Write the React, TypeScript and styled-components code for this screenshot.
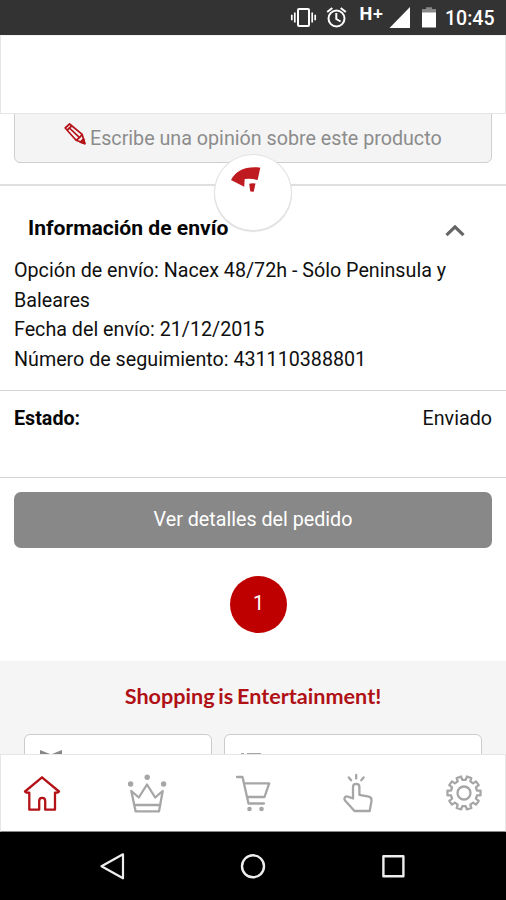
import React from "react";
import styled, { createGlobalStyle } from "styled-components";

const GlobalStyle = createGlobalStyle`
  *, *::before, *::after { box-sizing: border-box; }
  body { margin: 0; background: #fff; font-family: Roboto, "Liberation Sans", sans-serif; }
  p, h2, h3 { margin: 0; }
  button { font: inherit; border: 0; padding: 0; background: none; }
`;

const Screen = styled.div`
  width: 506px;
  height: 900px;
  display: flex;
  flex-direction: column;
  overflow: hidden;
  background: #fff;
  color: #101010;
`;

const StatusBar = styled.div`
  height: 35px;
  flex: none;
  display: flex;
  justify-content: flex-end;
  align-items: flex-start;
  padding-right: 11px;
  background: #333;
  color: #fff;
`;

const StatusIcon = styled.svg<{ $gap: number }>`
  flex: none;
  height: 35px;
  margin-right: ${(p) => p.$gap}px;
`;

const Network = styled.span`
  width: 24px;
  margin-right: 6px;
  font: 700 18px/26px "Open Sans", sans-serif;
`;

const Clock = styled.span`
  width: 50px;
  font-size: 19.5px;
  font-weight: 500;
  line-height: 37px;
  white-space: nowrap;
`;

const Header = styled.header`
  height: 79px;
  flex: none;
  border: 1px solid #e6e6e6;
  border-top-color: #f4f4f4;
  background: #fff;
`;

const Content = styled.main`
  position: relative;
  height: 640px;
  flex: none;
  display: flex;
  flex-direction: column;
  overflow: hidden;
`;

const ReviewButton = styled.button`
  height: 57px;
  flex: none;
  margin: -8px 14px 0;
  display: flex;
  align-items: flex-end;
  padding: 0 0 7px 49px;
  border: 1px solid #cfcfcf;
  border-radius: 6px;
  background: #f4f4f4;
  color: #8c8c8c;
  font-size: 19.7px;
  line-height: 32px;
  white-space: nowrap;

  svg { margin: 0 4px 10px 0; flex: none; }
`;

const Loader = styled.div`
  position: absolute;
  left: 214px;
  top: 40px;
  width: 78px;
  height: 77px;
  border: 1px solid #e2e2e2;
  border-radius: 50%;
  background: #fff;
  box-shadow: 0 1px 1px #dedede;

  svg { display: block; }
`;

const ShippingSection = styled.section`
  height: 207px;
  flex: none;
  margin-top: 21px;
  border-top: 2px solid #dfdfdf;
  border-bottom: 1px solid #d5d5d5;
  padding: 0 14px;
`;

const SectionHead = styled.div`
  height: 70px;
  display: flex;
  justify-content: space-between;
  padding: 0 27px 0 14px;

  svg { margin-top: 39px; }
`;

const SectionTitle = styled.h3`
  font-size: 21.1px;
  font-weight: 700;
  line-height: 24px;
  padding-top: 30px;
  color: #050505;
  white-space: nowrap;
`;

const Details = styled.div`
  font-size: 19.7px;
  line-height: 29.6px;
`;

const Line = styled.p`
  white-space: nowrap;
`;

const StateRow = styled.section`
  height: 87px;
  flex: none;
  display: flex;
  justify-content: space-between;
  padding: 15px 14px 0;
  border-bottom: 1px solid #d5d5d5;
  font-size: 19.7px;
  line-height: 25px;

  strong { font-weight: 700; color: #050505; }
`;

const OrderButton = styled.button`
  height: 56px;
  flex: none;
  margin: 14px 14px 0;
  border-radius: 7px;
  background: #888;
  color: #fff;
  font-size: 19.7px;
  line-height: 54px;
`;

const Page = styled.div`
  width: 57px;
  height: 57px;
  flex: none;
  margin: 28px 0 0 230px;
  border-radius: 50%;
  background: #bf0000;
  color: #fff;
  font-size: 19.7px;
  line-height: 56px;
  text-align: center;
`;

const Footer = styled.footer`
  flex: 1;
  margin-top: 28px;
  background: #f5f5f5;
`;

const Slogan = styled.h2`
  height: 73px;
  padding-top: 21px;
  text-align: center;
  color: #b01116;
  font: 700 21.6px/28px Lato, sans-serif;
  word-spacing: -1.5px;
  white-space: nowrap;
`;

const FooterCards = styled.div`
  display: flex;
  gap: 12px;
  padding: 0 24px;
`;

const FooterCard = styled.div<{ $width: number }>`
  width: ${(p) => p.$width}px;
  height: 40px;
  flex: none;
  padding: 14px 0 0 14px;
  border: 1px solid #ccc;
  border-radius: 6px;
  background: #fff;

  svg { display: block; }
`;

const TabBar = styled.nav`
  height: 78px;
  flex: none;
  display: flex;
  justify-content: space-between;
  padding: 0 19px;
  border: 1px solid #e6e6e6;
  border-bottom-color: #888;
  background: #fff;
`;

const Tab = styled.button<{ $active?: boolean }>`
  width: 44px;
  display: flex;
  align-items: center;
  justify-content: center;
  color: ${(p) => (p.$active ? "#b51218" : "#a6a6a6")};
`;

const NavBar = styled.div`
  flex: 1;
  display: flex;
  justify-content: center;
  align-items: center;
  gap: 100px;
  background: #000;
`;

const TabSvg = ({ children }: { children: React.ReactNode }) => (
  <svg width="44" height="44" viewBox="0 0 44 44" fill="none" stroke="currentColor" strokeWidth="2.3" strokeLinejoin="round" strokeLinecap="round">
    {children}
  </svg>
);

const gearPath = (() => {
  const pts: string[] = [];
  for (let i = 0; i < 10; i++) {
    const a = i * 36;
    [[-10.5, 13.2], [-8, 16.7], [8, 16.7], [10.5, 13.2]].forEach(([d, r]) => {
      const t = ((a + d - 72) * Math.PI) / 180;
      pts.push(`${(22 + r * Math.cos(t)).toFixed(2)} ${(22 + r * Math.sin(t)).toFixed(2)}`);
    });
  }
  return `M${pts.join("L")}Z`;
})();

export default function App() {
  return (
    <>
      <GlobalStyle />
      <Screen>
        <StatusBar>
          <StatusIcon $gap={9} width="27" viewBox="0 0 27 35" fill="none" stroke="#fff" strokeWidth="1.7">
            <rect x="8" y="8.9" width="11" height="17.2" rx="1" strokeWidth="2" />
            <path d="M4.8 12.5v10M1.8 14.7v5.6M22.2 12.5v10M25.2 14.7v5.6" />
          </StatusIcon>
          <StatusIcon $gap={12} width="21" viewBox="0 0 21 35" fill="none" stroke="#fff" strokeWidth="2">
            <circle cx="10.5" cy="18.5" r="8" />
            <path d="M10.3 13v6l4.3 2.5M1.2 12l5.1-4M19.8 12l-5.1-4" />
          </StatusIcon>
          <Network>H+</Network>
          <StatusIcon $gap={11} width="22" viewBox="0 0 22 35">
            <path d="M0.5 28L21 7v21z" fill="#fff" />
          </StatusIcon>
          <StatusIcon $gap={9} width="14" viewBox="0 0 14 35">
            <path d="M0 9h4V7.3h6V9h4v4H0z" fill="#888" />
            <path d="M0 12.5h14v15H0z" fill="#fff" />
          </StatusIcon>
          <Clock>10:45</Clock>
        </StatusBar>
        <Header />
        <Content>
          <ReviewButton>
            <svg width="22" height="22" viewBox="0 0 22 22" fill="none" stroke="#b51218" strokeWidth="1.7" strokeLinejoin="round">
              <path d="M1.2 5L5.6 1 18.2 11.4l2.5 9-8.6-3.2z" />
              <path d="M3.2 7L7.8 2.8M5.4 5l10.2 9.6M12.1 17.2l3.4-2.6 2.7-3.2" />
              <path d="M20.8 20.8l-4.4-1.6 3.2-3.4z" fill="#b51218" />
            </svg>
            Escribe una opinión sobre este producto
          </ReviewButton>
          <ShippingSection>
            <SectionHead>
              <SectionTitle>Información de envío</SectionTitle>
              <svg width="20" height="12" viewBox="0 0 20 12" fill="none" stroke="#666" strokeWidth="3.2">
                <path d="M1.5 10.2L10 1.9l8.5 8.3" />
              </svg>
            </SectionHead>
            <Details>
              <Line>Opción de envío: Nacex 48/72h - Sólo Peninsula y</Line>
              <Line>Baleares</Line>
              <Line>Fecha del envío: 21/12/2015</Line>
              <Line>Número de seguimiento: 431110388801</Line>
            </Details>
          </ShippingSection>
          <StateRow>
            <strong>Estado:</strong>
            <span>Enviado</span>
          </StateRow>
          <OrderButton>Ver detalles del pedido</OrderButton>
          <Page>1</Page>
          <Footer>
            <Slogan>Shopping is Entertainment!</Slogan>
            <FooterCards>
              <FooterCard $width={188}>
                <svg width="24" height="12" viewBox="0 0 24 12" fill="none" stroke="#888" strokeWidth="2">
                  <path d="M2 12V2.5l10 4 10-4v9.500" />
                </svg>
              </FooterCard>
              <FooterCard $width={258}>
                <svg width="24" height="12" viewBox="0 0 24 12" stroke="#888" strokeWidth="2">
                  <path d="M2 5.200h3M8 5.200h14" />
                </svg>
              </FooterCard>
            </FooterCards>
          </Footer>
          <Loader>
            <svg width="76" height="75" viewBox="215 155 76 75" fill="#bf1a20">
              <path d="M231 180C236 170.500 246 166 260.300 167.700L257.600 180Q251 178 244.700 179L244.200 186.700Z" />
              <path d="M249.200 183.800Q252 182.800 255.500 183.600L253.800 191.500Q252 192 250.200 191.300Z" />
            </svg>
          </Loader>
        </Content>
        <TabBar>
          <Tab $active>
            <TabSvg>
              <path d="M5 20.5L22 6.3l17 14.2-1.5 1.2H35v17H25.2V30c0-4.2-6-4.2-6 0v8.700H9.300v-17H6.500z" />
            </TabSvg>
          </Tab>
          <Tab>
            <TabSvg>
              <path d="M5.300 20l7.500 6.500L21 13.500l8.200 13 7.500-6.500L33 40.300H9.600zM8 34h26.500" />
              <g fill="currentColor" stroke="none">
                <circle cx="4.600" cy="13" r="2.7" />
                <circle cx="21.200" cy="6.200" r="2.7" />
                <circle cx="37.600" cy="13" r="2.7" />
              </g>
            </TabSvg>
          </Tab>
          <Tab>
            <TabSvg>
              <path d="M6 6h5.5l6 26.500H33M12.800 12.300h25.400L33.500 26H16" />
              <g fill="currentColor" stroke="none">
                <circle cx="18.500" cy="38" r="2.300" />
                <circle cx="30.500" cy="38" r="2.300" />
              </g>
            </TabSvg>
          </Tab>
          <Tab>
            <TabSvg>
              <path d="M16 27.500V16c0-4.200 6.400-4.200 6.400 0v7.800l9.400 1.900c2 .5 2.900 1.800 2.700 4L32.700 40H17.500L8 29.500c-1.500-2.500.5-4.800 3-3.800zM19.200 4v3.500M11.800 6.500l2.300 2.800M26.600 6.500l-2.300 2.800" />
            </TabSvg>
          </Tab>
          <Tab>
            <TabSvg>
              <path d={gearPath} />
              <circle cx="22" cy="22" r="6.500" />
            </TabSvg>
          </Tab>
        </TabBar>
        <NavBar>
          <svg width="40" height="40" viewBox="0 0 40 40" fill="none" stroke="#eee" strokeWidth="2.2" strokeLinejoin="round">
            <path d="M8.500 20.300L30 8.300v24z" />
          </svg>
          <svg width="40" height="40" viewBox="0 0 40 40" fill="none" stroke="#eee" strokeWidth="2.4">
            <circle cx="20" cy="20.300" r="11" />
          </svg>
          <svg width="40" height="40" viewBox="0 0 40 40" fill="none" stroke="#eee" strokeWidth="2.4" strokeLinejoin="round">
            <rect x="10.400" y="10.300" width="20" height="20" />
          </svg>
        </NavBar>
      </Screen>
    </>
  );
}
